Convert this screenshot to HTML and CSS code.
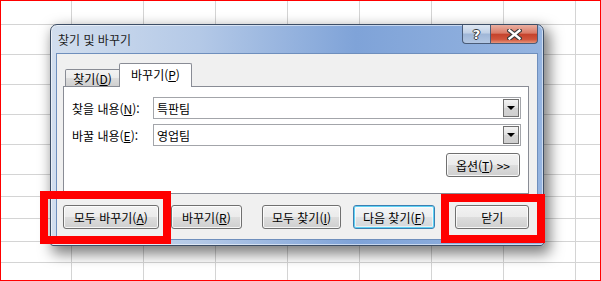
FILE: index.html
```html
<!DOCTYPE html>
<html lang="ko">
<head>
  <meta charset="UTF-8" />
  <title>찾기 및 바꾸기</title>
  <link rel="stylesheet" href="styles.css">
</head>
<body>
  <div class="sheet">
    <div class="dialog">
      <div class="titlebar">
        <span class="title">찾기 및 바꾸기</span>
        <div class="caption-btns">
          <div class="cap cap-help">?</div>
          <div class="cap cap-close">
            <svg width="15" height="11" viewBox="0 0 15 11">
              <path d="M2.5 1.5 L12.5 9.5 M12.5 1.5 L2.5 9.5" stroke="#3a3a3a" stroke-width="4.6" stroke-linecap="square"/>
              <path d="M2.5 1.5 L12.5 9.5 M12.5 1.5 L2.5 9.5" stroke="#fff" stroke-width="2.4" stroke-linecap="square"/>
            </svg>
          </div>
        </div>
      </div>

      <div class="client">
        <div class="tabs">
          <div class="tab">찾기(<u>D</u>)</div>
          <div class="tab tab-active">바꾸기(<u>P</u>)</div>
        </div>

        <div class="panel">
          <div class="field-row">
            <label class="field-label">찾을 내용(<u>N</u>):</label>
            <div class="combo">
              <span class="combo-text">특판팀</span>
              <div class="combo-drop"><span class="arrow"></span></div>
            </div>
          </div>
          <div class="field-row">
            <label class="field-label">바꿀 내용(<u>E</u>):</label>
            <div class="combo">
              <span class="combo-text">영업팀</span>
              <div class="combo-drop"><span class="arrow"></span></div>
            </div>
          </div>
          <div class="panel-foot">
            <div class="btn btn-options">옵션(<u>T</u>) &gt;&gt;</div>
          </div>
        </div>

        <div class="actions">
          <div class="btn btn-replace-all">모두 바꾸기(<u>A</u>)</div>
          <div class="btn btn-replace">바꾸기(<u>R</u>)</div>
          <div class="btn btn-find-all group-start">모두 찾기(<u>I</u>)</div>
          <div class="btn btn-find-next btn-default">다음 찾기(<u>F</u>)</div>
          <div class="btn btn-close group-start">닫기</div>
        </div>
      </div>
    </div>

    <div class="mark mark-replace-all"></div>
    <div class="mark mark-close"></div>
  </div>
</body>
</html>
```

FILE: styles.css
```css
* {
  box-sizing: border-box;
}

body {
  margin: 0;
  font-family: "Noto Sans CJK KR", "Noto Sans", sans-serif;
  font-size: 12px;
  color: #000;
}

u {
  text-decoration: underline;
  text-underline-offset: 1px;
}

/* spreadsheet behind the dialog */
.sheet {
  position: relative;
  width: 601px;
  height: 281px;
  border: 1px solid #ff0000;
  overflow: hidden;
  background-color: #fff;
  background-image:
    linear-gradient(to right, #d4d4d4 1px, transparent 1px),
    linear-gradient(#d4d4d4, #d4d4d4),
    linear-gradient(#d4d4d4, #d4d4d4),
    linear-gradient(#d4d4d4, #d4d4d4),
    linear-gradient(#d4d4d4, #d4d4d4),
    linear-gradient(#d4d4d4, #d4d4d4),
    linear-gradient(#d4d4d4, #d4d4d4),
    linear-gradient(#d4d4d4, #d4d4d4),
    linear-gradient(#d4d4d4, #d4d4d4),
    linear-gradient(#d4d4d4, #d4d4d4),
    linear-gradient(#d4d4d4, #d4d4d4);
  background-size:
    72px 100%,
    100% 1px, 100% 1px, 100% 1px, 100% 1px, 100% 1px,
    100% 1px, 100% 1px, 100% 1px, 100% 1px, 100% 1px;
  background-repeat: repeat-x, no-repeat;
  background-position:
    70px 0,
    0 23px, 0 53px, 0 83px, 0 113px, 0 143px,
    0 173px, 0 195px, 0 217px, 0 240px, 0 261px;
}

/* window */
.dialog {
  position: absolute;
  left: 49px;
  top: 23px;
  width: 494px;
  height: 222px;
  padding: 0 5px 5px;
  border: 1px solid #3d4e66;
  border-radius: 7px 7px 3px 3px;
  background: linear-gradient(to right, #d2deee 0%, #b4c9e7 30%, #7fa3d8 62%, #95b4e0 100%);
  box-shadow: 4px 6px 14px 2px rgba(0, 0, 0, 0.5), inset 0 0 0 1px rgba(255, 255, 255, 0.55);
}

.titlebar {
  display: flex;
  align-items: center;
  height: 28px;
  padding-left: 2px;
}

.title {
  color: #1c1c1c;
  font-size: 12px;
}

.caption-btns {
  display: flex;
  align-self: flex-start;
  margin-left: auto;
}

.cap {
  display: flex;
  justify-content: center;
  align-items: center;
  height: 19px;
  border: 1px solid #4a5c78;
  border-top: none;
}

.cap-help {
  width: 28px;
  border-right: none;
  border-radius: 0 0 0 4px;
  background: linear-gradient(#dfe7f2 0%, #c0d0e6 45%, #9fb6d7 50%, #b3c7e3 100%);
  color: #fff;
  font-family: "DejaVu Sans", sans-serif;
  font-weight: bold;
  font-size: 13px;
  text-shadow: 1px 0 0 #3a3a3a, -1px 0 0 #3a3a3a, 0 1px 0 #3a3a3a, 0 -1px 0 #3a3a3a;
}

.cap-close {
  width: 48px;
  border-radius: 0 0 4px 0;
  background: linear-gradient(#eab0a2 0%, #d97a66 45%, #c5432c 52%, #d0553c 80%, #e7957c 100%);
}

.client {
  height: 187px;
  padding: 0 8px 0 6px;
  border: 1px solid #6f8fbd;
  background: #f0f0f0;
}

/* tabs */
.tabs {
  display: flex;
  align-items: flex-end;
  height: 32px;
  padding-left: 2px;
}

.tab {
  display: flex;
  justify-content: center;
  align-items: center;
  width: 55px;
  height: 17px;
  border: 1px solid #898c95;
  border-bottom: none;
  border-radius: 2px 0 0 0;
  background: linear-gradient(#f3f3f3 0%, #ebebeb 50%, #dddddd 50%, #cfcfcf 100%);
}

.tab-active {
  position: relative;
  z-index: 1;
  width: 73px;
  height: 24px;
  margin-left: -1px;
  margin-bottom: -1px;
  padding-bottom: 2px;
  border-radius: 2px 2px 0 0;
  background: #fff;
}

.panel {
  height: 108px;
  padding: 10px 7px 0 8px;
  border: 1px solid #898c95;
  background: #fff;
}

.field-row {
  display: flex;
  align-items: center;
  margin-bottom: 5px;
}

.field-label {
  width: 81px;
}

.combo {
  display: flex;
  align-items: center;
  flex: 1;
  height: 22px;
  padding: 0 1px 0 3px;
  border: 1px solid #a3a5aa;
}

.combo-text {
  flex: 1;
}

.combo-drop {
  display: flex;
  justify-content: center;
  align-items: center;
  width: 16px;
  height: 18px;
  border: 1px solid #707070;
  background: linear-gradient(#f4f4f4, #e0e0e0 50%, #d4d4d4 51%, #cfcfcf);
}

.arrow {
  width: 0;
  height: 0;
  border-left: 4px solid transparent;
  border-right: 4px solid transparent;
  border-top: 4px solid #000;
}

.panel-foot {
  display: flex;
  justify-content: flex-end;
  margin-top: 7px;
  padding-right: 1px;
}

/* push buttons */
.btn {
  display: flex;
  justify-content: center;
  align-items: center;
  height: 24px;
  border: 1px solid #707070;
  border-radius: 3px;
  background: linear-gradient(#f2f2f2 0%, #ebebeb 50%, #dddddd 51%, #cfcfcf 100%);
  box-shadow: inset 0 0 0 1px rgba(255, 255, 255, 0.8);
}

.btn-options {
  width: 74px;
}

.actions {
  display: flex;
  gap: 12px;
  margin-top: 11px;
}

.group-start {
  margin-left: 8px;
}

.btn-replace-all {
  width: 96px;
}

.btn-replace {
  width: 72px;
}

.btn-find-all {
  width: 79px;
}

.btn-find-next {
  width: 83px;
}

.btn-close {
  width: 74px;
}

.btn-default {
  border-color: #3c7fb1;
  background: linear-gradient(#f4f6f8 0%, #eceef0 50%, #dfe2e5 51%, #d3d7da 100%);
  box-shadow: inset 0 0 0 1px #5fd2f5, inset 0 0 0 2px rgba(255, 255, 255, 0.6);
}

/* red highlight boxes */
.mark {
  position: absolute;
  border: 8px solid #ff0000;
}

.mark-replace-all {
  left: 39px;
  top: 190px;
  width: 131px;
  height: 53px;
}

.mark-close {
  left: 440px;
  top: 193px;
  width: 104px;
  height: 49px;
}
```
